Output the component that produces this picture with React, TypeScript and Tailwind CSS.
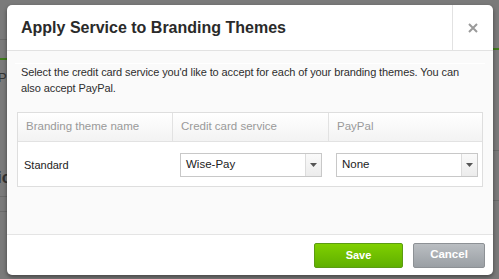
import React from "react";

function Arrow() {
  return (
    <svg width="7" height="4" viewBox="0 0 7 4"><path d="M0 0h7L3.5 4z" fill="#555" /></svg>
  );
}

function Select({ value }: { value: string }) {
  return (
    <div className="flex h-[24px] w-[142px] items-stretch border border-[#c8c8c8] bg-white">
      <div className="flex flex-1 items-center pl-[5px] text-[11.5px] text-[#222]">{value}</div>
      <div className="flex w-[16px] items-center justify-center border-l border-[#dcdcdc] bg-gradient-to-b from-[#fafafa] to-[#ececec]">
        <Arrow />
      </div>
    </div>
  );
}

export default function App() {
  return (
    <div
      className="relative h-[279px] w-[499px] overflow-hidden bg-[#7a7a7a]"
      style={{ fontFamily: '"Liberation Sans", Arial, sans-serif' }}
    >
      {/* faint underlying page */}
      <div className="absolute left-0 top-[39px] h-px w-[20px] bg-[#6a6a6a]" />
      <div className="absolute left-0 top-[58px] h-[2px] w-[20px] bg-[#3f7a1a]" />
      <div className="absolute left-[-2px] top-[68px] text-[13px] text-[#333]">Pa</div>
      <div className="absolute left-[-3px] top-[165px] text-[17px] font-bold text-[#333]">ic</div>
      <div className="absolute left-0 top-[196px] h-px w-[20px] bg-[#6a6a6a]" />
      <div className="absolute left-0 top-[211px] h-px w-[20px] bg-[#6a6a6a]" />
      <div className="absolute right-0 top-[48px] h-[2px] w-[6px] bg-[#3f7a1a]" />
      <div className="absolute right-0 top-[150px] h-px w-[6px] bg-[#6a6a6a]" />
      <div className="absolute right-0 top-[200px] h-px w-[6px] bg-[#6a6a6a]" />

      <div className="relative ml-[7px] mt-[5px] flex h-[270px] w-[486px] flex-col overflow-hidden rounded-[5px] bg-white shadow-[0_2px_4px_rgba(0,0,0,0.45)]">
        {/* header */}
        <div className="flex h-[46px] border-b border-[#e2e2e2]">
          <div className="flex flex-1 items-center pl-[14px] pt-[1px] text-[16px] font-bold text-[#2a2a2a]">
            Apply Service to Branding Themes
          </div>
          <div className="flex w-[41px] items-center justify-center border-l border-[#e2e2e2] text-[#9a9a9a]">
            <svg width="10" height="10" viewBox="0 0 10 10">
              <path d="M1 1L9 9M9 1L1 9" stroke="#9a9a9a" strokeWidth="2" />
            </svg>
          </div>
        </div>
        {/* body */}
        <div className="flex flex-1 flex-col border-b border-[#e4e4e4] bg-[#fafafa] px-[10px]">
          <div className="mx-[-2px] mt-[12px] h-px bg-white" />
          <p className="px-[4px] text-[11px] leading-[16px] tracking-[-0.1px] text-[#2e2e2e]">
            Select the credit card service you'd like to accept for each of your branding themes. You can also accept PayPal.
          </p>
          <div className="mt-[16px] border border-[#dedede] bg-white">
            <div className="flex h-[29px] border-b border-[#e2e2e2] bg-gradient-to-b from-[#ffffff] to-[#f3f3f3] text-[11.5px] text-[#999]">
              <div className="flex w-[155px] items-center border-r border-[#e2e2e2] pl-[8px]">Branding theme name</div>
              <div className="flex w-[156px] items-center border-r border-[#e2e2e2] pl-[8px]">Credit card service</div>
              <div className="flex flex-1 items-center pl-[8px]">PayPal</div>
            </div>
            <div className="flex h-[44px] items-center pt-[2px] text-[11px] text-[#222]">
              <div className="w-[162px] pl-[6px]">Standard</div>
              <Select value="Wise-Pay" />
              <div className="w-[14px]" />
              <Select value="None" />
            </div>
          </div>
        </div>
        {/* footer */}
        <div className="flex h-[40px] items-center justify-end gap-[10px] pr-[8px]">
          <button className="h-[25px] w-[89px] rounded-[2px] border border-[#5b9c12] bg-gradient-to-b from-[#80d000] to-[#5faf00] text-[11px] font-bold text-white">
            Save
          </button>
          <button className="h-[25px] w-[72px] rounded-[2px] border border-[#8d9195] bg-gradient-to-b from-[#babec2] to-[#9a9fa4] text-[11.5px] font-bold text-white">
            Cancel
          </button>
        </div>
      </div>
    </div>
  );
}
